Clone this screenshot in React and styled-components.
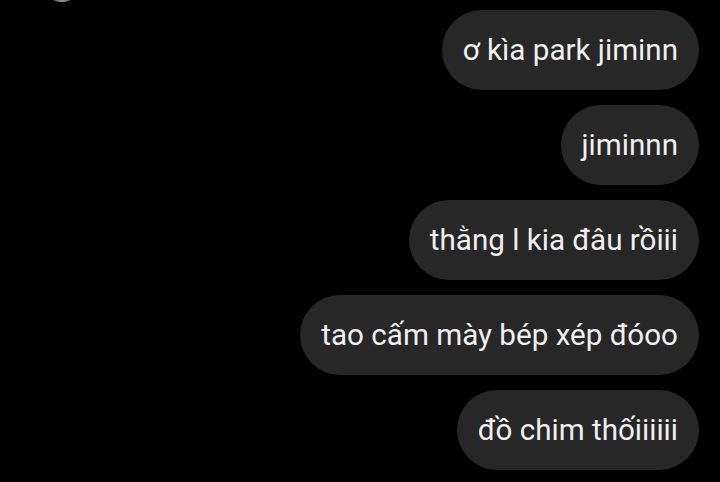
import React from 'react';
import styled, { createGlobalStyle } from 'styled-components';

const messages = [
    'ơ kìa park jiminn',
    'jiminnn',
    'thằng l kia đâu rồiii',
    'tao cấm mày bép xép đóoo',
    'đồ chim thốiiiiii',
];

const Global = createGlobalStyle`
html, body {
    margin: 0;
    background: #000;
}
body {
    font-family: Roboto, "Noto Sans", sans-serif;
}
`

const App = () => {
    return (
        <Chat>
            <Global />
            <Avatar />
            {messages.map((text, i) => (
                <Bubble key={i}>{text}</Bubble>
            ))}
        </Chat>
    );
}

const Chat = styled.div`
position: relative;
width: 720px;
height: 482px;
overflow: hidden;
box-sizing: border-box;
padding: 10px 21px 0 0;
display: flex;
flex-direction: column;
align-items: flex-end;
gap: 15px;
background: #000;
`

const Avatar = styled.div`
position: absolute;
left: 42px;
top: -38px;
width: 40px;
height: 40px;
border-radius: 50%;
background: radial-gradient(ellipse at 50% 100%, #9a9a9a 0%, #444 40%, #000 72%);
`

const Bubble = styled.div`
height: 80px;
box-sizing: border-box;
padding: 0 21px;
display: flex;
align-items: center;
border-radius: 40px;
background: #272727;
color: #f0f0f0;
font-size: 29.6px;
white-space: nowrap;
`

export default App;
